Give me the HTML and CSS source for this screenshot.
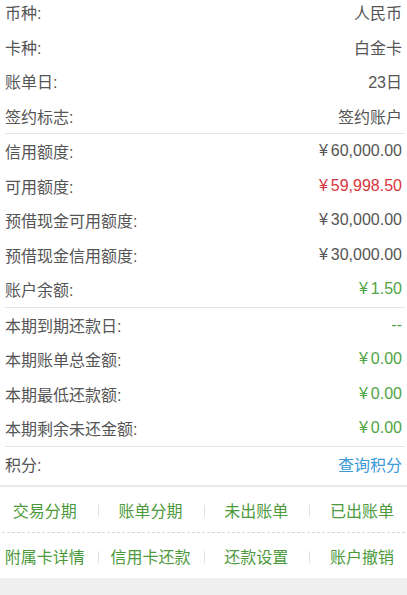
FILE: index.html
```html
<!DOCTYPE HTML>
<html>
	<head>
		<title>信用卡详情</title>
		<meta charset="utf-8">
		<link rel="stylesheet" href="styles.css">
	</head>
	<body>
		<div class="info">
			<div class="group">
				<p class="row"><span>币种:</span><span>人民币</span></p>
				<p class="row"><span>卡种:</span><span>白金卡</span></p>
				<p class="row"><span>账单日:</span><span>23日</span></p>
				<p class="row"><span>签约标志:</span><span>签约账户</span></p>
			</div>
			<div class="group">
				<p class="row"><span>信用额度:</span><span><i>¥</i>60,000.00</span></p>
				<p class="row"><span>可用额度:</span><span class="red"><i>¥</i>59,998.50</span></p>
				<p class="row"><span>预借现金可用额度:</span><span><i>¥</i>30,000.00</span></p>
				<p class="row"><span>预借现金信用额度:</span><span><i>¥</i>30,000.00</span></p>
				<p class="row"><span>账户余额:</span><span class="green"><i>¥</i>1.50</span></p>
			</div>
			<div class="group">
				<p class="row"><span>本期到期还款日:</span><span class="green">--</span></p>
				<p class="row"><span>本期账单总金额:</span><span class="green"><i>¥</i>0.00</span></p>
				<p class="row"><span>本期最低还款额:</span><span class="green"><i>¥</i>0.00</span></p>
				<p class="row"><span>本期剩余未还金额:</span><span class="green"><i>¥</i>0.00</span></p>
			</div>
			<div class="group last">
				<p class="row"><span>积分:</span><a class="blue" href="#">查询积分</a></p>
			</div>
		</div>
		<div class="links">
			<ul class="line dashed">
				<li><a href="#">交易分期</a></li>
				<li><a href="#">账单分期</a></li>
				<li><a href="#">未出账单</a></li>
				<li><a href="#">已出账单</a></li>
			</ul>
			<ul class="line">
				<li><a href="#">附属卡详情</a></li>
				<li><a href="#">信用卡还款</a></li>
				<li><a href="#">还款设置</a></li>
				<li><a href="#">账户撤销</a></li>
			</ul>
		</div>
		<div class="bottom"></div>
	</body>
</html>
```
FILE: styles.css
```css
*{ margin:0; padding:0; }
html,body{ overflow:hidden; }
body{ background:#fff; font-family:"Liberation Sans","Noto Sans CJK SC",sans-serif; font-size:16px; color:#555; width:407px; }
a{ text-decoration:none; }
i{ font-style:normal; margin-right:3px; }
.info{ margin-top:-5px; }
.group{ margin:0 2px 0 5px; border-bottom:1px solid #e6e6e6; }
.group.last{ border-bottom:none; }
.row{ display:flex; justify-content:space-between; align-items:center; height:34.5px; padding-right:3px; }
.red{ color:#d8343d; }
.green{ color:#4fa444; }
.blue{ color:#3b9ad9; }
.links{ margin-top:4px; border-top:2px solid #e8e8e8; overflow:hidden; }
.line{ display:flex; list-style:none; height:45px; margin:0 -8px; }
.dashed{ border-bottom:1px dashed #d6d6d6; }
.line li{ flex:1; display:flex; align-items:center; justify-content:center; position:relative; }
.line li + li::before{ content:""; position:absolute; left:0; top:18px; height:12px; border-left:1px solid #e2e2e2; }
.line a{ color:#4c9a3c; }
.bottom{ height:20px; background:#efefef; }
```
